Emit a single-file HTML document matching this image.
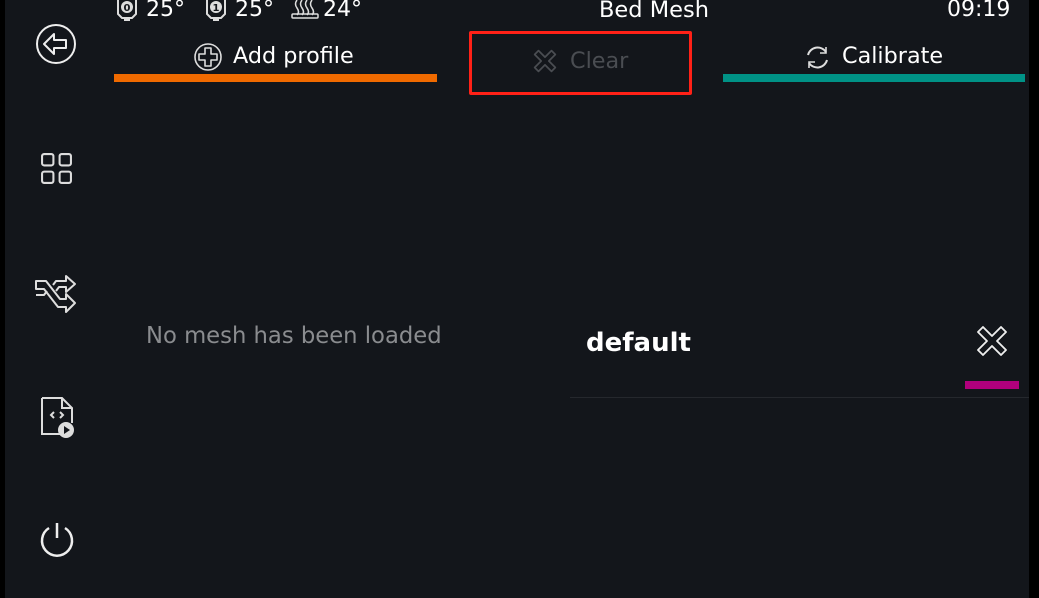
<!DOCTYPE html>
<html><head><meta charset="utf-8"><style>
body{margin:0;width:1039px;height:598px;background:#13161b;position:relative;overflow:hidden;font-family:"DejaVu Sans","Liberation Sans",sans-serif;color:#fff}
.a{position:absolute;white-space:nowrap}
svg{position:absolute;overflow:visible}
</style></head><body>
<div class="a" style="left:0;top:0;width:5px;height:598px;background:#000"></div>
<div class="a" style="left:1029px;top:0;width:10px;height:598px;background:#000"></div>

<svg style="left:115px;top:0" width="24" height="22" viewBox="0 0 24 22"><path d="M3 0v14l4 4h10l4-4V0" fill="none" stroke="#ddd" stroke-width="2"/><circle cx="12" cy="7" r="6" fill="#ddd"/><text x="12" y="11" font-size="10" font-weight="bold" fill="#13161b" text-anchor="middle" font-family="DejaVu Sans">0</text><path d="M9 20h6" stroke="#ddd" stroke-width="2"/></svg>
<div class="a" style="left:146px;top:-3px;font-size:22px">25°</div>
<svg style="left:204px;top:0" width="24" height="22" viewBox="0 0 24 22"><path d="M3 0v14l4 4h10l4-4V0" fill="none" stroke="#ddd" stroke-width="2"/><circle cx="12" cy="7" r="6" fill="#ddd"/><text x="12" y="11" font-size="10" font-weight="bold" fill="#13161b" text-anchor="middle" font-family="DejaVu Sans">1</text><path d="M9 20h6" stroke="#ddd" stroke-width="2"/></svg>
<div class="a" style="left:235px;top:-3px;font-size:22px">25°</div>
<svg style="left:291px;top:0" width="28" height="20" viewBox="0 0 28 20"><path d="M6 0q-3 4 0 8t0 7M11 0q-3 4 0 8t0 7M16 0q-3 4 0 8t0 7M21 0q-3 4 0 8t0 7" fill="none" stroke="#ddd" stroke-width="1.5"/><rect x="1" y="14" width="26" height="4" rx="1" fill="none" stroke="#ddd" stroke-width="1.5"/></svg>
<div class="a" style="left:323px;top:-3px;font-size:22px">24°</div>
<div class="a" style="left:599px;top:-3px;font-size:22.5px">Bed Mesh</div>
<div class="a" style="left:947px;top:-3px;font-size:22px">09:19</div>

<svg style="left:36px;top:24px" width="42" height="42" viewBox="0 0 42 42"><circle cx="20" cy="20" r="19" fill="none" stroke="#eee" stroke-width="2"/><path d="M8 20l10-10v6h12v8H18v6z" fill="none" stroke="#eee" stroke-width="2" stroke-linejoin="round"/></svg>
<svg style="left:40px;top:152px" width="33" height="33" viewBox="0 0 32 32" fill="none" stroke="#ddd" stroke-width="2"><rect x="2" y="2" width="11" height="11" rx="2"/><rect x="19" y="2" width="11" height="11" rx="2"/><rect x="2" y="19" width="11" height="11" rx="2"/><rect x="19" y="19" width="11" height="11" rx="2"/></svg>
<svg style="left:34px;top:273px" width="44" height="38" viewBox="0 0 44 38" fill="none" stroke="#ddd" stroke-width="2" stroke-linejoin="round"><path d="M2 8h10l14 18h6v-5l9 9-9 9v-5h-8L10 16H2z"/><path d="M2 22h8l3-4M19 12l3-4h10V3l9 8-9 8v-5h-7l-3 4"/></svg>
<svg style="left:40px;top:396px" width="34" height="42" viewBox="0 0 34 42" fill="none" stroke="#ddd" stroke-width="2"><path d="M2 2h20l10 10v15M22 2v10h10M2 2v36h18"/><path d="M14 16l-3 3 3 3M20 16l3 3-3 3"/><circle cx="26" cy="34" r="7" fill="#ddd"/><path d="M24 30v8l6-4z" fill="#13161b" stroke="none"/></svg>
<svg style="left:38px;top:521px" width="38" height="38" viewBox="0 0 38 38" fill="none" stroke="#eee" stroke-width="2.5"><path d="M19 2v15"/><path d="M11 7a15 15 0 1 0 16 0"/></svg>

<svg style="left:194px;top:43px" width="28" height="28" viewBox="0 0 28 28" fill="none" stroke="#ddd" stroke-width="1.6"><circle cx="14" cy="14" r="13"/><path d="M11 5h6v6h6v6h-6v6h-6v-6H5v-6h6z" stroke-linejoin="round"/></svg>
<div class="a" style="left:233px;top:43px;font-size:22.3px">Add profile</div>
<div class="a" style="left:114px;top:74px;width:323px;height:8px;background:#f06a00"></div>

<div class="a" style="left:469px;top:31px;width:217px;height:58px;border:3px solid #ff2117;border-radius:2px"></div>
<svg style="left:532px;top:48px" width="26" height="26" viewBox="0 0 24 24" fill="none" stroke="#4a4d52" stroke-width="1.6" stroke-linejoin="round"><path transform="rotate(45 12 12)" d="M9.5 1h5v8.5H23v5h-8.5V23h-5v-8.5H1v-5h8.5z"/></svg>
<div class="a" style="left:570px;top:48px;font-size:22.3px;color:#4a4d52">Clear</div>

<svg style="left:804px;top:44px" width="27" height="27" viewBox="0 0 27 27" fill="none" stroke="#ddd" stroke-width="2"><path d="M4 11a10 10 0 0 1 18-3M23 16a10 10 0 0 1-18 3"/><path d="M22 3v6h-6M5 24v-6h6" stroke-width="1.6"/></svg>
<div class="a" style="left:842px;top:43px;font-size:22.3px">Calibrate</div>
<div class="a" style="left:723px;top:74px;width:302px;height:8px;background:#009286"></div>

<div class="a" style="left:146px;top:323px;font-size:22.7px;color:#8a8c8f">No mesh has been loaded</div>
<div class="a" style="left:586px;top:328px;font-size:26px;font-weight:bold">default</div>
<svg style="left:975px;top:324px" width="34" height="34" viewBox="0 0 24 24" fill="none" stroke="#eee" stroke-width="1.3" stroke-linejoin="round"><path transform="rotate(45 12 12)" d="M9.5 0.5h5v9h9v5h-9v9h-5v-9h-9v-5h9z"/></svg>
<div class="a" style="left:965px;top:381px;width:54px;height:8px;background:#b0007c"></div>
<div class="a" style="left:570px;top:397px;width:459px;height:1px;background:#25282d"></div>
</body></html>
